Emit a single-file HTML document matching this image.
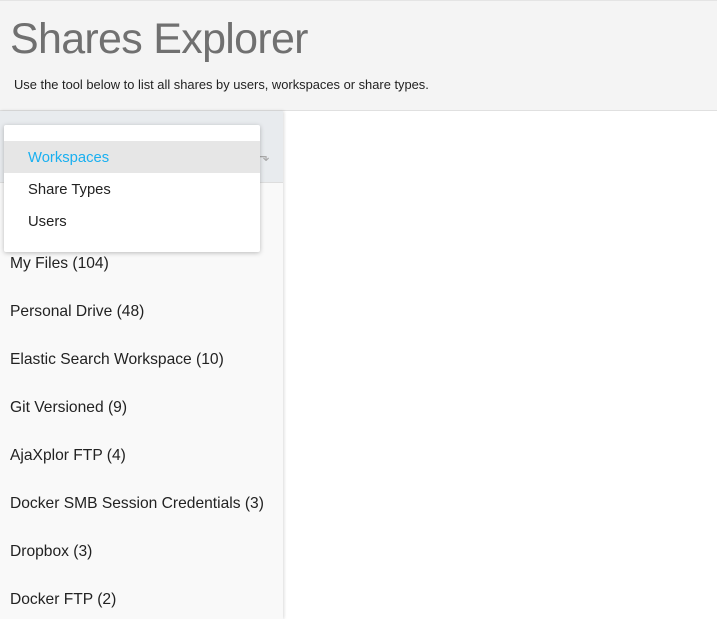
<!DOCTYPE html>
<html><head><style>
body{margin:0;width:717px;height:619px;overflow:hidden;font-family:"Liberation Sans",sans-serif;background:#fff;position:relative}
.hdr{position:absolute;left:0;top:0;width:717px;height:111px;background:#f4f4f4;border-top:1px solid #e4e4e4;border-bottom:1px solid #e0e0e0;box-sizing:border-box}
.hdr h1{position:absolute;left:10px;top:14px;margin:0;font-weight:normal;font-size:43px;color:#707070;letter-spacing:-0.7px}
.hdr p{position:absolute;left:14px;top:76px;margin:0;font-size:12.9px;color:#222}
.side{position:absolute;left:0;top:111px;width:283px;height:508px;background:#f9f9f9;box-shadow:1px 0 3px rgba(0,0,0,.15)}
.tb{position:absolute;left:0;top:0;width:283px;height:71px;background:#e8ebee;border-bottom:1px solid #ddd}
.item{position:absolute;left:10px;font-size:15.6px;color:#222}
.menu{position:absolute;left:4px;top:125px;width:256px;height:127px;background:#fff;border-radius:2px;box-shadow:0 1px 5px rgba(0,0,0,.25)}
.mi{position:absolute;left:0;width:256px;height:32px;line-height:34px;padding-left:24px;box-sizing:border-box;font-size:14.8px;color:#222}
.arr{position:absolute;left:258px;top:148px;color:#aaa;font-size:14px}
</style></head><body>
<div class="hdr"><h1>Shares Explorer</h1><p>Use the tool below to list all shares by users, workspaces or share types.</p></div>
<div class="side"><div class="tb"></div>
<div class="item" style="top:144px">My Files (104)</div>
<div class="item" style="top:192px">Personal Drive (48)</div>
<div class="item" style="top:240px">Elastic Search Workspace (10)</div>
<div class="item" style="top:288px">Git Versioned (9)</div>
<div class="item" style="top:336px">AjaXplor FTP (4)</div>
<div class="item" style="top:384px">Docker SMB Session Credentials (3)</div>
<div class="item" style="top:432px">Dropbox (3)</div>
<div class="item" style="top:480px">Docker FTP (2)</div>
</div>
<div class="arr">⬎</div>
<div class="menu">
<div class="mi" style="top:16px;background:#e6e6e6;color:#1ab0f0">Workspaces</div>
<div class="mi" style="top:48px">Share Types</div>
<div class="mi" style="top:80px">Users</div>
</div>
</body></html>
